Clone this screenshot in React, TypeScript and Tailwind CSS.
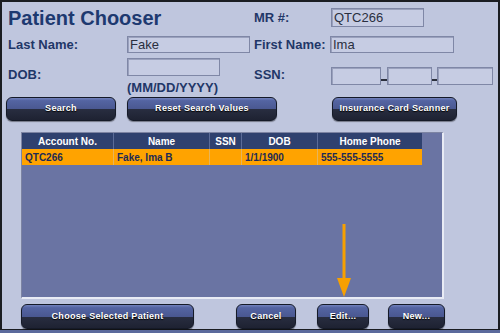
import * as React from "react"

const font = "font-['Liberation_Sans',Arial,sans-serif]"

function GlossButton({ label, className }: { label: string; className: string }) {
  return (
    <button
      className={`${className} flex items-center justify-center rounded-[6px] border border-[#151a28] bg-[linear-gradient(to_bottom,#7282bd_0%,#5464a2_12%,#4a5891_50%,#282d40_52%,#1e2232_100%)] text-[9px] font-bold tracking-[0.3px] text-white shadow-[0_1px_1px_rgba(0,0,0,0.4)] [text-shadow:0_1px_1px_#000]`}
    >
      {label}
    </button>
  )
}

function Field({ value, className }: { value?: string; className: string }) {
  return (
    <div
      className={`${className} flex items-center border border-[#7f87a6] bg-[#c6cce3] pl-[2px] text-[13px] leading-none text-[#2a2f3f] shadow-[inset_1px_1px_0_#9aa1bd]`}
    >
      {value}
    </div>
  )
}

const columns = [
  { key: "account", title: "Account No.", width: "w-[92px]" },
  { key: "name", title: "Name", width: "w-[96px]" },
  { key: "ssn", title: "SSN", width: "w-[32px]" },
  { key: "dob", title: "DOB", width: "w-[76px]" },
  { key: "phone", title: "Home Phone", width: "w-[104px]" },
]

const rows = [
  { account: "QTC266", name: "Fake, Ima B", ssn: "", dob: "1/1/1900", phone: "555-555-5555" },
]

export default function App() {
  return (
    <div className={`relative flex h-[333px] w-[500px] flex-col ${font}`}>
      <div className="flex h-[330px] flex-col border-x-2 border-t-2 border-b border-[#1b1d22] bg-[#bfc6de] text-[#1f3768]">
        {/* Title + MR */}
        <div className="mt-[4px] flex h-[23px] items-center">
          <h1 className="ml-[6px] w-[246px] text-[20px] font-bold leading-none text-[#1d3970]">
            Patient Chooser
          </h1>
          <span className="w-[77px] text-[13px] font-bold">MR #:</span>
          <Field value="QTC266" className="h-[19px] w-[93px]" />
        </div>

        {/* Names */}
        <div className="mt-[7px] flex h-[17px] items-center">
          <span className="ml-[6px] w-[119px] text-[13px] font-bold">Last Name:</span>
          <Field value="Fake" className="h-[17px] w-[123px]" />
          <span className="ml-[4px] w-[76px] text-[13px] font-bold">First Name:</span>
          <Field value="Ima" className="h-[17px] w-[124px]" />
        </div>

        {/* DOB + SSN */}
        <div className="mt-[5px] flex h-[38px] items-start">
          <span className="ml-[6px] mt-[9px] w-[119px] text-[13px] font-bold leading-[16px]">DOB:</span>
          <div className="flex w-[127px] flex-col">
            <Field className="h-[18px] w-[93px]" />
            <span className="mt-[4px] text-[13px] font-bold leading-[16px]">(MM/DD/YYYY)</span>
          </div>
          <span className="mt-[9px] w-[77px] text-[13px] font-bold leading-[16px]">SSN:</span>
          <div className="mt-[9px] flex h-[18px] items-end">
            <Field className="h-[18px] w-[50px]" />
            <span className="mb-[4px] h-[2px] w-[6px] bg-[#2b2f3c]" />
            <Field className="h-[18px] w-[45px]" />
            <span className="mb-[4px] h-[2px] w-[5px] bg-[#2b2f3c]" />
            <Field className="h-[18px] w-[56px]" />
          </div>
        </div>

        {/* Search buttons */}
        <div className="mt-[1px] flex h-[24px]">
          <GlossButton label="Search" className="ml-[4px] w-[110px]" />
          <GlossButton label="Reset Search Values" className="ml-[11px] w-[150px]" />
          <GlossButton label="Insurance Card Scanner" className="ml-[55px] w-[125px]" />
        </div>

        {/* Results table */}
        <div className="ml-[19px] mt-[11px] h-[167px] w-[423px] border-l border-t border-r-2 border-b-2 border-l-[#7d84a3] border-t-[#7d84a3] border-r-[#e8ebf5] border-b-[#e8ebf5] bg-[#6a74a3]">
          <div className="flex h-[16px] w-[400px] bg-[#2f416f]">
            {columns.map((c) => (
              <div
                key={c.key}
                className={`${c.width} flex items-center justify-center border-r border-[#5b6b98] text-[10px] font-bold text-white last:border-r-0`}
              >
                {c.title}
              </div>
            ))}
          </div>
          {rows.map((r) => (
            <div key={r.account} className="flex h-[16px] w-[400px] bg-[#ffa300]">
              {columns.map((c) => (
                <div
                  key={c.key}
                  className={`${c.width} flex items-center border-r border-[#e7b45a] pl-[3px] text-[10px] font-bold text-[#1d2a55] last:border-r-0`}
                >
                  {r[c.key as keyof typeof r]}
                </div>
              ))}
            </div>
          ))}
        </div>

        {/* Bottom actions */}
        <div className="mt-[5px] flex h-[25px]">
          <GlossButton label="Choose Selected Patient" className="ml-[19px] w-[173px]" />
          <GlossButton label="Cancel" className="ml-[42px] w-[60px]" />
          <GlossButton label="Edit..." className="ml-[21px] w-[52px]" />
          <GlossButton label="New..." className="ml-[19px] w-[57px]" />
        </div>
      </div>
      <div className="h-[3px] bg-[#5b6a9c]" />

      {/* Orange callout arrow */}
      <svg className="absolute left-[334px] top-[222px]" width="20" height="78" viewBox="0 0 20 78">
        <line x1="10" y1="2" x2="10" y2="60" stroke="#f7a000" strokeWidth="3" />
        <polygon points="3,56 17,56 10,75" fill="#f7a000" />
      </svg>
    </div>
  )
}
